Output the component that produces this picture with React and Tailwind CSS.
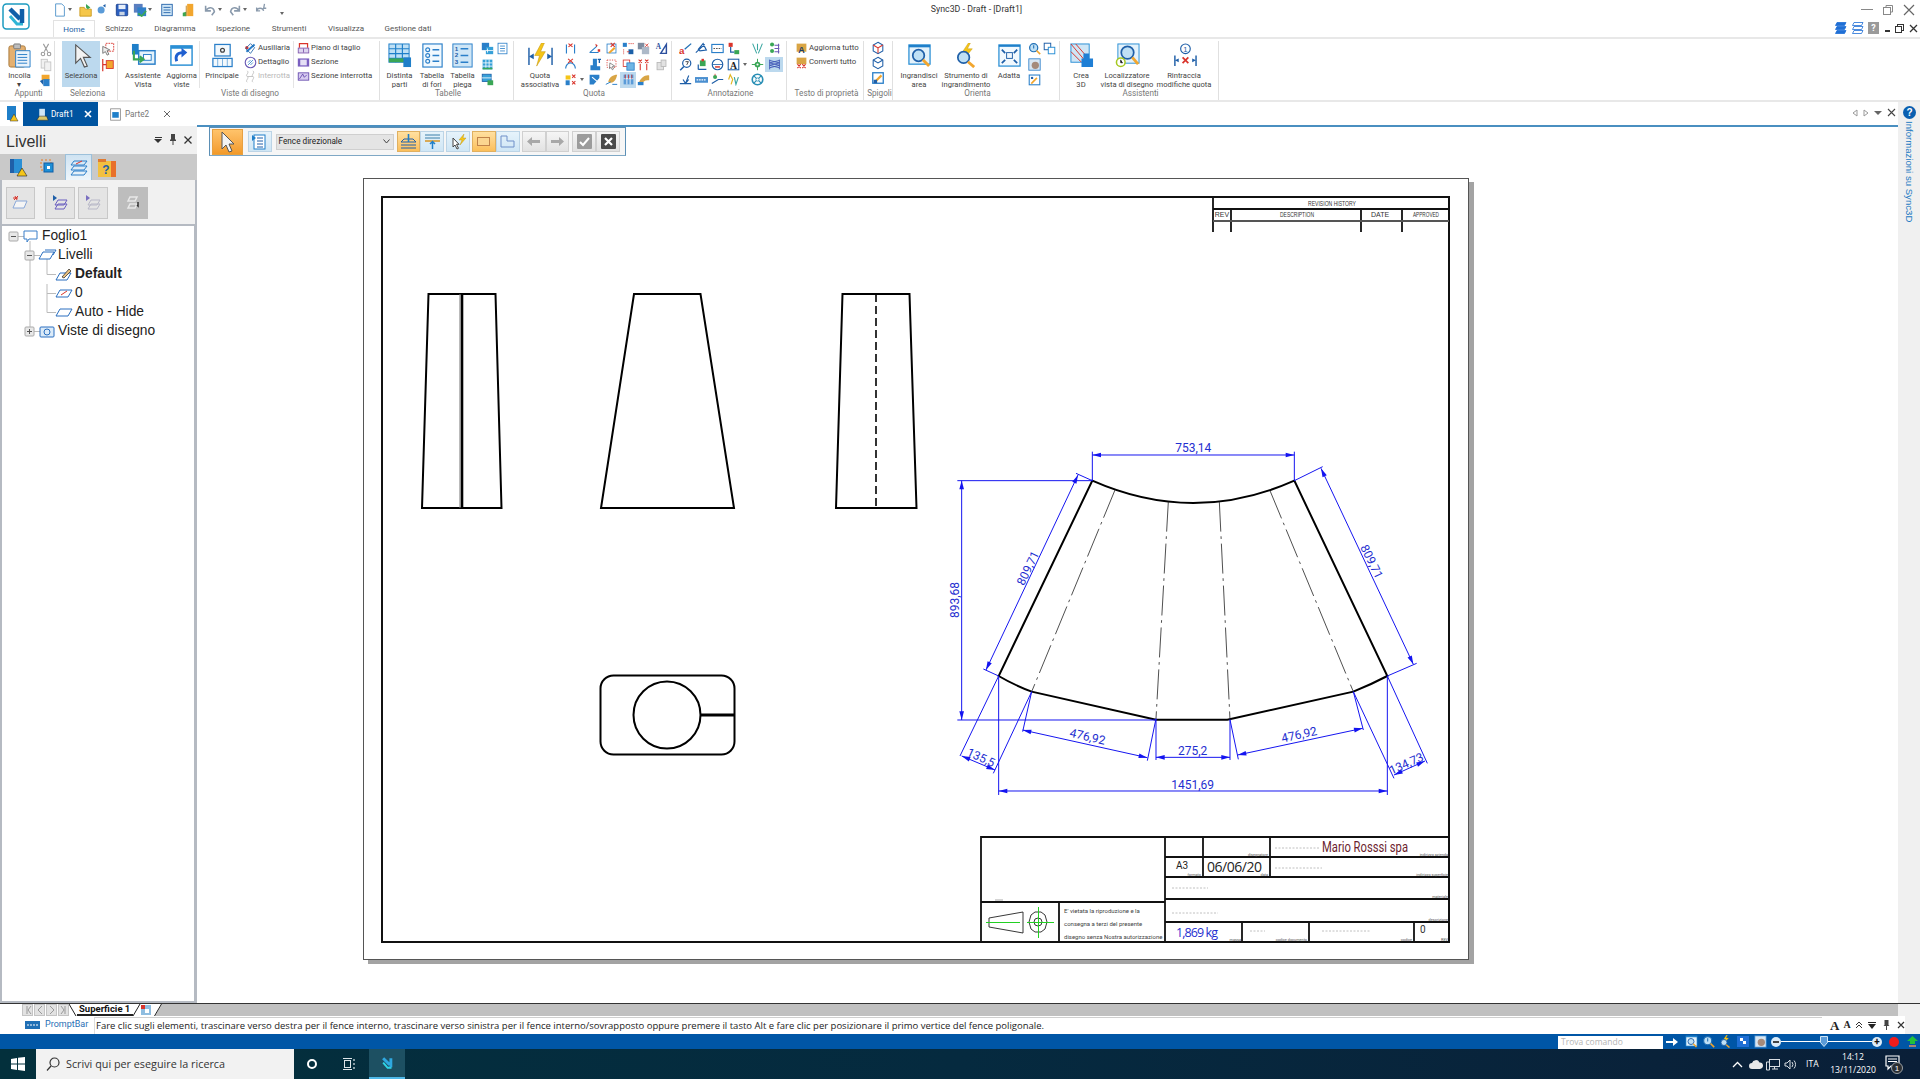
const RED = "#d9342b"
const BLU = "#2a7fc9"
const ORG = "#f2a62e"
const GRN = "#3aa655"
const YEL = "#f5c518"

// small ribbon glyphs, all on a 16x16 box
const glyphs = {
  scissors: <g fill="none" stroke="#9a9a9a" strokeWidth="1.2"><path d="M5 1l5 9M11 1L6 10" /><circle cx="4.5" cy="12.5" r="2" /><circle cx="11.5" cy="12.5" r="2" /></g>,
  copy: <g fill="#f1f1f1" stroke="#c4c4c4"><rect x="2.5" y="1.5" width="7" height="10" /><rect x="6.5" y="4.5" width="7" height="10" /></g>,
  brush: <g><rect x="3" y="2" width="9" height="6" fill={ORG} /><rect x="5" y="7" width="7" height="8" fill={BLU} /><path d="M1 9l4-2v7z" fill="#1a5fa8" /></g>,
  selbox: <g fill="none"><rect x="5.5" y="1.5" width="9" height="9" stroke={RED} strokeDasharray="2 1" /><path d="M2 5l8 4-3 1 2 4-2 1-2-4-3 2z" fill="#eee" stroke="#555" strokeWidth=".8" /></g>,
  pin: <g><rect x="6" y="3" width="8" height="9" fill={ORG} stroke={RED} /><path d="M2 1v14M2 7.5h4" stroke={RED} strokeWidth="1.4" /></g>,
  aux: <g><path d="M3 12L13 3" stroke={BLU} strokeWidth="2.4" /><circle cx="3.5" cy="7" r="2" fill={RED} /><path d="M8 2l5 5-5 7-6-6z" fill="none" stroke="#1a5fa8" /></g>,
  detail: <g fill="none"><circle cx="8" cy="8" r="6.5" stroke="#6b5bb5" strokeWidth="1.4" /><path d="M5 11l6-6M5 8l3-3M8 11l3-3" stroke={BLU} /></g>,
  broke: <g fill="none" stroke="#b9b9b9"><path d="M4 1c3 3-3 5 0 7s-3 5 0 7M11 1c3 3-3 5 0 7s-3 5 0 7M4 8h7" /></g>,
  piano: <g fill="none"><path d="M3 7V2h10v5" stroke={RED} strokeWidth="1.5" /><rect x="1.5" y="7.5" width="13" height="6" stroke="#7a4fa8" fill="#ddd5f0" /><path d="M8 8v5" stroke="#7a4fa8" /></g>,
  sezione: <g><rect x="1" y="3" width="14" height="10" fill="#7a5fc0" /><rect x="4" y="4.5" width="8" height="7" fill="#e5e0f5" /></g>,
  sezint: <g fill="none"><rect x="1.5" y="3.5" width="13" height="9" stroke="#5c3fa8" fill="#d7ccf0" /><path d="M3 11l4-6 2 4 3-3" stroke="#5c3fa8" /></g>,
  tb1: <g><rect x="1" y="1" width="9" height="9" fill={BLU} /><rect x="6" y="6" width="9" height="9" fill="#36a0d8" /><path d="M8 8v5M6 10.5h9" stroke="#fff" /></g>,
  tb2: <g fill="#fff" stroke={BLU}><rect x="2.5" y="1.5" width="11" height="13" /><path d="M5 5h6M5 8h6M5 11h6" /></g>,
  tb3: <g><rect x="2" y="2" width="12" height="12" fill="#36a0d8" /><path d="M2 6h12M2 10h12M6 2v12M10 2v12" stroke="#fff" /><rect x="2" y="12" width="12" height="2" fill={GRN} /></g>,
  tb4: <g><rect x="1.5" y="1.5" width="11" height="9" fill="#36a0d8" stroke="#1a5fa8" /><path d="M1 6h12" stroke="#fff" /><rect x="8" y="9" width="7" height="6" fill={GRN} /></g>,
  dimh: <g fill="none" stroke={BLU} strokeWidth="1.4"><path d="M3 3v11M13 3v11" /><path d="M5.5 2l5 4M10.5 2l-5 4" stroke={RED} /></g>,
  angle: <g fill="none"><path d="M2 13L11 5M2 13h11" stroke={BLU} strokeWidth="1.3" /><path d="M9 2l3 2-2 2zM12 9h3v3h-3z" fill={RED} /></g>,
  boxred: <g><rect x="2.5" y="2.5" width="11" height="11" fill="#fff" stroke={BLU} /><path d="M4 13l7-7 2 2-7 6z" fill={ORG} /><path d="M7 1l5 5M12 1L7 6" stroke={RED} strokeWidth="1.4" /></g>,
  tree: <g><rect x="1" y="1" width="5" height="5" fill={BLU} /><path d="M8 2h7M2 9v6" stroke={RED} strokeDasharray="1.5 1" /><rect x="8" y="9" width="6" height="6" fill="#1a5fa8" /><path d="M6 12h3" stroke={RED} /></g>,
  stack: <g><rect x="1" y="1" width="8" height="8" fill="#7f8da0" /><rect x="6" y="6" width="9" height="9" fill="#adb9c8" /><path d="M10 2l4 4M14 2l-4 4" stroke={RED} /></g>,
  arc: <g fill="none"><path d="M2 13a6 7 0 0 1 12 0" stroke={BLU} strokeWidth="1.5" /><path d="M5 1l6 5M11 1L5 6" stroke={RED} strokeWidth="1.3" /></g>,
  lshape: <g fill={BLU}><path d="M6 1h5v9h4v5H3V9h3z" /><path d="M12 1h4v1.5h-1.2V6h-1.6V2.5H12z" fill="#1a5fa8" /></g>,
  cursor: <g fill="none"><rect x="2.5" y="2.5" width="11" height="9" stroke={RED} strokeDasharray="1.5 1.5" /><path d="M6 6l6 4-3 .5 1.5 3-1.5 1-1.5-3-2 1.5z" fill="#fff" stroke="#555" strokeWidth=".8" /></g>,
  docs: <g><rect x="1.5" y="2.5" width="8" height="8" fill="#fff" stroke={RED} /><rect x="6" y="6" width="9" height="9" fill="#6db5e5" stroke={BLU} /></g>,
  xx: <g fill="none" stroke={RED} strokeWidth="1.3"><path d="M2 2l4 4M6 2L2 6M10 2l4 4M14 2l-4 4M4 7v8M12 7v8" /></g>,
  mix: <g><path d="M2 3h6v5H2z" fill={YEL} /><path d="M2 9h5v6H2z" fill={BLU} /><path d="M10 2l4 4M14 2l-4 4M10 10l4 4M14 10l-4 4" stroke={RED} strokeWidth="1.3" /></g>,
  fold: <g><path d="M2 2h12v4l-7 8H2z" fill={BLU} /><path d="M5 5l7 6M8 14h6" stroke="#fff" strokeWidth="1.4" /></g>,
  wing: <g><path d="M4 11c1-6 6-9 11-9-1 4-2 9-8 10z" fill="#d9a545" /><path d="M1 14l6-3M9 14h6" stroke={BLU} strokeWidth="1.2" /></g>,
  bars: <g><rect x="2" y="2" width="12" height="12" fill="#5a9bd8" /><path d="M6 2v12M10 2v12M2 7h12" stroke="#fff" /><path d="M4 2v5M8 2v5M12 2v5" stroke={RED} /></g>,
  wave: <g><path d="M2 13c2-7 8-11 13-10v6c-5-1-8 2-9 5z" fill="#d9a545" /><rect x="1" y="11" width="7" height="4" fill={BLU} /></g>,
  atri: <g><path d="M7 14L14 3v11z" fill="none" stroke="#2b4f9e" strokeWidth="1.8" /><text x="1" y="9" fontSize="9" fontWeight="700" fill="#2b4f9e" fontFamily="Liberation Serif">A</text></g>,
  gdoc: <g fill="#e2e2e2" stroke="#b5b5b5"><rect x="2.5" y="5.5" width="8" height="9" /><rect x="7.5" y="2.5" width="6" height="8" /></g>,
  afront: <g><text x="0" y="15" fontSize="12" fontWeight="700" fill={RED} fontFamily="Liberation Sans">a</text><path d="M7 9L15 2" stroke="#1f6fb5" strokeWidth="1.6" /></g>,
  node: <g fill="none" stroke="#1f5fa8" strokeWidth="1.4"><path d="M1 13L12 3M4 9l6-7 4 8-8 1z" /></g>,
  abox: <g><rect x="1" y="3" width="14" height="10" fill="#fff" stroke={BLU} strokeWidth="1.4" /><path d="M3 8h10" stroke="#333" strokeDasharray="2 1.2" /></g>,
  conn: <g><rect x="2" y="1" width="5" height="5" fill={RED} /><rect x="9" y="10" width="6" height="5" fill={GRN} /><path d="M4.5 6v6.5H9" stroke="#1f5fa8" strokeWidth="1.5" fill="none" /></g>,
  fork: <g fill="none" stroke="#3aa6a0" strokeWidth="1.3"><path d="M2 2l5 12M14 2L9 14M8 2v8" /></g>,
  gsym: <g><circle cx="5" cy="3" r="2.5" fill={GRN} /><path d="M8 4h6M8 8h6M8 12h6M13 2v12" stroke="#6b5bb5" strokeWidth="1.3" /><circle cx="5" cy="11" r="2.5" fill={GRN} /></g>,
  mag7: <g fill="none"><circle cx="9.5" cy="6.5" r="5" stroke="#1f5fa8" strokeWidth="1.5" /><path d="M6 10.5L1.5 15" stroke="#1f5fa8" strokeWidth="1.8" /><path d="M8 4.5h3.5l-2 4" stroke="#222" /></g>,
  gstar: <g><path d="M4 14V8M4 14h10" stroke="#1f5fa8" strokeWidth="1.5" /><rect x="6" y="3" width="7" height="7" fill={GRN} /><rect x="8" y="1" width="3" height="3" fill={RED} /></g>,
  cred: <g fill="none"><circle cx="8" cy="8" r="6.5" stroke="#1f5fa8" strokeWidth="1.4" /><path d="M1.5 8h13" stroke="#1f5fa8" /><path d="M5 11h6" stroke={RED} strokeWidth="1.8" /></g>,
  abold: <g><rect x="1.5" y="1.5" width="13" height="13" fill="#fff" stroke="#1f5fa8" strokeWidth="1.3" /><text x="8" y="13" fontSize="12" fontWeight="700" textAnchor="middle" fill="#222" fontFamily="Liberation Serif">A</text></g>,
  gcross: <g><path d="M8 1v14M1 8h14" stroke={GRN} strokeWidth="1.2" /><circle cx="8" cy="8" r="3.5" fill={GRN} /><circle cx="8" cy="8" r="1.3" fill="#fff" /></g>,
  lattice: <g fill="none" stroke="#3f55b5" strokeWidth="1.1"><path d="M2 2v12M14 2v12M2 3l12 3L2 9l12 3M14 3L2 6l12 3L2 12" /></g>,
  weld: <g fill="none" stroke="#1f5fa8" strokeWidth="1.4"><path d="M1 13h14M8 13L12 3M5 8l3 5 4-5" /></g>,
  dots: <g><rect x="0" y="5" width="16" height="7" fill="#4a8fd0" /><path d="M2 8.5h12" stroke="#fff" strokeDasharray="2 1" strokeWidth="1.5" /></g>,
  gline: <g><path d="M1 13l8-5h6" stroke="#1f5fa8" strokeWidth="1.5" fill="none" /><circle cx="5" cy="5" r="2.5" fill={GRN} /><path d="M5 1v2" stroke={RED} /></g>,
  yfork: <g fill="none" strokeWidth="1.4"><path d="M2 8l2-6 3 6-2 6" stroke="#e0b520" /><path d="M9 5l2 9 3-9" stroke="#3aa6a0" /></g>,
  tcirc: <g fill="none"><circle cx="8" cy="8" r="6.5" stroke="#2a8fb5" strokeWidth="2" /><path d="M3.5 3.5l9 9M12.5 3.5l-9 9" stroke="#2a8fb5" strokeWidth="1.5" /><circle cx="8" cy="8" r="2" fill="#fff" stroke="#2a8fb5" /></g>,
  aglobe: <g><rect x="2" y="2" width="12" height="10" fill="#d9a545" /><text x="8" y="14" fontSize="11" fontWeight="700" textAnchor="middle" fill="#1a3a6a" fontFamily="Liberation Sans">A</text></g>,
  aconv: <g><rect x="2" y="2" width="12" height="8" fill="#d9a545" /><path d="M3 10l4 5M7 10l-4 5M9 10l4 5M13 10l-4 5" stroke={RED} strokeWidth="1.3" /></g>,
  cubeR: <g fill="#fff" stroke="#1f5fa8" strokeWidth="1.2"><path d="M8 1.5l5.5 3v7L8 14.5l-5.5-3v-7z" /><path d="M2.5 4.5L8 8l5.5-3.5M8 8v6" stroke={RED} /></g>,
  cube: <g fill="#fff" stroke="#1f5fa8" strokeWidth="1.2"><path d="M8 1.5l5.5 3v7L8 14.5l-5.5-3v-7z" /><path d="M2.5 4.5L8 8l5.5-3.5" /></g>,
  cubeB: <g><rect x="2" y="2" width="12" height="12" fill="#fff" stroke={BLU} strokeWidth="1.5" /><path d="M5 12l7-7" stroke={ORG} strokeWidth="2.5" /><rect x="3" y="10" width="4" height="4" fill="#1f5fa8" /></g>,
  zoomQ: <g fill="none"><circle cx="7" cy="7" r="5" fill="#bfe0f5" stroke="#1f6fb5" strokeWidth="1.5" /><path d="M10.5 10.5L15 15" stroke={ORG} strokeWidth="2" /><path d="M7 4v4" stroke="#1f6fb5" strokeWidth="1.3" /></g>,
  twin: <g fill="#fff" stroke="#1f5fa8" strokeWidth="1.2"><rect x="1.5" y="1.5" width="8" height="8" /><rect x="6.5" y="6.5" width="8" height="8" stroke="#2a8fd5" /></g>,
  grab: <g><rect x="1" y="1" width="14" height="14" fill="#d8e6f2" stroke={BLU} /><circle cx="9" cy="9" r="4.5" fill="#a58a7a" /></g>,
  window: <g><rect x="1.5" y="2.5" width="13" height="12" fill="#fff" stroke={BLU} strokeWidth="1.3" /><path d="M4 13l7-7" stroke={ORG} strokeWidth="2" /><circle cx="5" cy="6" r="1.5" fill="#1f5fa8" /></g>,
}

const G = ({ n, s = 14, className = "" }) => (
  <svg width={s} height={s} viewBox="0 0 16 16" className={"shrink-0 " + className}>{glyphs[n]}</svg>
)

const Caret = () => <span className="inline-block w-0 h-0 border-x-[2.5px] border-x-transparent border-t-[3px] border-t-[#666]"></span>

// big ribbon pictures, 26x26
const big = {
  clip: <g><rect x="2" y="3" width="17" height="22" rx="2" fill="#e4b070" stroke="#a9793a" /><rect x="7" y="1" width="7" height="5" rx="1" fill="#bdbdbd" stroke="#777" /><path d="M9 8h15v17H9z" fill="#eaf3fb" stroke={BLU} /><path d="M11 12h10M11 15h10M11 18h10M11 21h10" stroke={BLU} /></g>,
  arrow: <path d="M7 2l0 19 5-5 4 9 3-1-4-9h7z" fill="#f3f3f3" stroke="#555" strokeWidth="1.2" />,
  assist: <g><rect x="8" y="8" width="17" height="14" fill="#e4f2fb" stroke={BLU} strokeWidth="1.5" /><rect x="13" y="12" width="8" height="6" fill="#fff" stroke={BLU} /><path d="M1 1h7v11H1z" fill="#1f7fc9" /><path d="M3 8v9h9M9 14l4 3-4 3" fill="none" stroke={GRN} strokeWidth="2.2" /></g>,
  refresh: <g><rect x="2" y="3" width="22" height="20" fill="#fff" stroke="#2a8fd5" strokeWidth="1.5" /><path d="M2 3h22v3H2z" fill="#2a8fd5" /><path d="M8 19c-2-6 1-9 6-9" fill="none" stroke="#1f5fd0" strokeWidth="3" /><path d="M13 5l6 5-6 5z" fill="#1f5fd0" /></g>,
  princ: <g fill="none" stroke={BLU} strokeWidth="1.3"><rect x="5" y="1.5" width="16" height="12" fill="#f3f9fd" /><circle cx="13" cy="7.5" r="2" stroke="#444" /><rect x="3" y="16" width="20" height="8.5" fill="#f3f9fd" /><path d="M13 16v8.5M8 16v8.5M18 16v8.5" strokeWidth=".6" /></g>,
  dist: <g><rect x="2" y="1" width="21" height="19" fill="#bfe0f5" stroke="#1f7fc9" /><path d="M2 6h21M2 11h21M2 16h21M9 1v19M16 1v19" stroke="#1f7fc9" strokeWidth="1.2" /><rect x="2" y="16" width="21" height="4" fill={GRN} /><rect x="17" y="15" width="8" height="10" fill="#1f7fc9" /></g>,
  fori: <g fill="none" stroke={BLU} strokeWidth="1.2"><rect x="3" y="1" width="20" height="24" fill="#f2f9fe" /><circle cx="8" cy="7" r="2" /><circle cx="8" cy="13" r="2" /><circle cx="8" cy="19" r="2" /><path d="M13 7h7M13 13h7M13 19h7" strokeWidth="1.6" /></g>,
  piega: <g><rect x="3" y="1" width="20" height="24" fill="#cfe6f6" stroke={BLU} /><g fontSize="6.5" fontFamily="Liberation Sans" fontWeight="700" fill="#1f5fa8"><text x="5" y="8">1</text><text x="5" y="15">2</text><text x="5" y="22">3</text></g><path d="M11 6h8M11 13h8M11 20h8" stroke={BLU} strokeWidth="1.4" /></g>,
  quota: <g><path d="M14 0L7 13h5l-3 11 9-15h-5l4-9z" fill={YEL} stroke="#c99a10" strokeWidth=".6" /><path d="M1 5v18M25 5v18" stroke="#1f5fa8" strokeWidth="1.5" /><path d="M1 14l5-3v6zM25 14l-5-3v6z" fill="#1f5fa8" /></g>,
  zoomw: <g><rect x="2" y="2" width="22" height="20" fill="#e4f2fb" stroke="#2a8fd5" strokeWidth="1.3" /><path d="M2 2h22v2.5H2z" fill="#1f7fc9" /><circle cx="12" cy="13" r="6" fill="#bfe0f5" stroke="#1f5fa8" strokeWidth="1.8" /><path d="M16.5 17.5L23 24" stroke={ORG} strokeWidth="3" /></g>,
  strum: <g><path d="M15 0L9 9h4l-2 7 8-10h-5l3-6z" fill={YEL} stroke="#c99a10" strokeWidth=".5" /><circle cx="10" cy="15" r="6" fill="#bfe0f5" stroke="#1f5fa8" strokeWidth="1.8" /><path d="M14.5 19.5L21 25" stroke={ORG} strokeWidth="3" /></g>,
  fit: <g><rect x="2" y="2" width="22" height="22" fill="#f2f9fe" stroke="#2a8fd5" strokeWidth="1.3" /><path d="M2 2h22v2H2z" fill="#1f7fc9" /><rect x="10" y="10" width="6" height="6" fill="none" stroke="#1f5fa8" /><path d="M5 7l3.5 3.5M21 7l-3.5 3.5M5 21l3.5-3.5M21 21l-3.5-3.5" stroke="#1f5fa8" strokeWidth="1.8" /></g>,
  crea: <g><rect x="2" y="1" width="19" height="19" fill="#cfe6f6" stroke="#2a8fd5" /><path d="M2 1l16 19M7 1l14 16M2 9l11 11" stroke={RED} /><path d="M15 11h6v5h4v9H13v-9h2z" fill="#1f7fd5" /></g>,
  loca: <g><rect x="3" y="1" width="22" height="20" fill="#e4f2fb" stroke="#2a8fd5" /><circle cx="13" cy="10" r="6.5" fill="#bfe0f5" stroke="#1f5fa8" strokeWidth="1.8" /><path d="M18 15l6 7" stroke={ORG} strokeWidth="3" /><circle cx="6" cy="20" r="4.5" fill="#fff" stroke="#a5c820" strokeWidth="1.6" /><path d="M6 17.5v3h2" stroke="#222" /></g>,
  rint: <g><circle cx="14" cy="6" r="5" fill="#fff" stroke="#1f5fa8" strokeWidth="1.2" /><text x="14" y="9" fontSize="8" textAnchor="middle" fill="#1f5fa8" fontFamily="Liberation Sans">1</text><path d="M3 13v11M25 13v11" stroke="#1f5fa8" strokeWidth="1.5" /><path d="M3 18l4-2v4zM25 18l-4-2v4z" fill="#1f5fa8" /><path d="M11 15l6 6M17 15l-6 6" stroke={RED} strokeWidth="1.8" /></g>,
}

const Big = ({ n, s = 25 }) => <svg width={s} height={s} viewBox="0 0 26 26" className="shrink-0">{big[n]}</svg>

const BigBtn = ({ n, w, l1, l2, active }) => (
  <div className={"flex flex-col items-center pt-[2px] shrink-0 " + w + (active ? " bg-[#bcd9ee] h-[46px]" : "")}>
    <Big n={n} />
    <div className="mt-[3px] text-[7.6px] leading-[9px] text-center whitespace-nowrap text-[#444]">{l1}<br />{l2}</div>
  </div>
)

const Group = ({ w, label, children }) => (
  <div className={"flex flex-col shrink-0 h-[59px] mt-[2px] border-r border-[#e0e0e0] " + w}>
    <div className="flex h-[47px]">{children}</div>
    <div className="text-[8.2px] leading-[10px] text-center text-[#777] pl-[3px] whitespace-nowrap">{label}</div>
  </div>
)

const Sep = () => <div className="w-px h-[47px] bg-[#e4e4e4] shrink-0"></div>

const ListRow = ({ n, t, gray }) => (
  <div className={"flex items-center gap-[1px] h-[14px] text-[7.8px] whitespace-nowrap " + (gray ? "text-[#b8b8b8]" : "text-[#444]")}>
    <G n={n} s={13} />{t}
  </div>
)

const IconCell = ({ n, hot }) => (
  <div className={"flex items-center justify-center h-[15.5px] " + (hot ? "bg-[#bcd9ee]" : "")}><G n={n} s={13} /></div>
)

const Ribbon = () => (
  <div className="flex h-[65px] border-t-2 border-b-2 border-[#e8e8e8] shrink-0 bg-white">
    <Group w="w-[55px]" label="Appunti">
      <BigBtn n="clip" w="w-[39px]" l1="Incolla" l2="▾" />
      <div className="flex flex-col mt-[2px] gap-[1px]"><G n="scissors" /><G n="copy" /><G n="brush" /></div>
    </Group>
    <Group w="w-[63px]" label="Seleziona">
      <div className="w-[7px]"></div>
      <BigBtn n="arrow" w="w-[38px]" l1="Seleziona" l2="" active />
      <div className="flex flex-col pl-[1px] mt-[1px] gap-[2px]"><G n="selbox" /><G n="pin" /></div>
    </Group>
    <Group w="w-[262px]" label="Viste di disegno">
      <div className="w-[4px]"></div>
      <BigBtn n="assist" w="w-[42px]" l1="Assistente" l2="Vista" />
      <BigBtn n="refresh" w="w-[35px]" l1="Aggiorna" l2="viste" />
      <Sep />
      <BigBtn n="princ" w="w-[44px]" l1="Principale" l2="" />
      <div className="w-[49px]">
        <ListRow n="aux" t="Ausiliaria" />
        <ListRow n="detail" t="Dettaglio" />
        <ListRow n="broke" t="Interrotta" gray />
      </div>
      <Sep />
      <div className="ml-[3px]">
        <ListRow n="piano" t="Piano di taglio" />
        <ListRow n="sezione" t="Sezione" />
        <ListRow n="sezint" t="Sezione interrotta" />
      </div>
    </Group>
    <Group w="w-[134px]" label="Tabelle">
      <div className="w-[2px]"></div>
      <BigBtn n="dist" w="w-[35px]" l1="Distinta" l2="parti" />
      <BigBtn n="fori" w="w-[30px]" l1="Tabella" l2="di fori" />
      <BigBtn n="piega" w="w-[31px]" l1="Tabella" l2="piega" />
      <div className="grid grid-cols-[15px_15px] content-start ml-[2px]">
        <IconCell n="tb1" /><IconCell n="tb2" />
        <IconCell n="tb3" /><div></div>
        <IconCell n="tb4" /><div></div>
      </div>
    </Group>
    <Group w="w-[158px]" label="Quota">
      <BigBtn n="quota" w="w-[52px]" l1="Quota" l2="associativa" />
      <div className="grid grid-cols-[16px_8px_17px_17px_16px_15px_20px] content-start -ml-[4px]">
        <IconCell n="dimh" /><div></div><IconCell n="angle" /><IconCell n="boxred" /><IconCell n="tree" /><IconCell n="stack" /><IconCell n="atri" />
        <IconCell n="arc" /><div></div><IconCell n="lshape" /><IconCell n="cursor" /><IconCell n="docs" /><IconCell n="xx" /><IconCell n="gdoc" />
        <IconCell n="mix" /><div className="flex items-center justify-center"><Caret /></div><IconCell n="fold" /><IconCell n="wing" /><IconCell n="bars" hot /><IconCell n="wave" /><div></div>
      </div>
    </Group>
    <Group w="w-[115px]" label="Annotazione">
      <div className="grid grid-cols-[16px_17px_15px_16px_8px_16px_18px] content-start ml-[5px]">
        <IconCell n="afront" /><IconCell n="node" /><IconCell n="abox" /><IconCell n="conn" /><div></div><IconCell n="fork" /><IconCell n="gsym" />
        <IconCell n="mag7" /><IconCell n="gstar" /><IconCell n="cred" /><IconCell n="abold" /><div className="flex items-center justify-center"><Caret /></div><IconCell n="gcross" /><IconCell n="lattice" hot />
        <IconCell n="weld" /><IconCell n="dots" /><IconCell n="gline" /><IconCell n="yfork" /><div></div><IconCell n="tcirc" /><div></div>
      </div>
    </Group>
    <Group w="w-[77px]" label="Testo di proprietà">
      <div className="ml-[8px]">
        <ListRow n="aglobe" t="Aggiorna tutto" />
        <ListRow n="aconv" t="Converti tutto" />
      </div>
    </Group>
    <Group w="w-[29px]" label="Spigoli">
      <div className="flex flex-col items-center w-full gap-[1px]"><G n="cubeR" /><G n="cube" /><G n="cubeB" /></div>
    </Group>
    <Group w="w-[167px]" label="Orienta">
      <div className="w-[4px]"></div>
      <BigBtn n="zoomw" w="w-[44px]" l1="Ingrandisci" l2="area" />
      <BigBtn n="strum" w="w-[50px]" l1="Strumento di" l2="ingrandimento" />
      <BigBtn n="fit" w="w-[36px]" l1="Adatta" l2="" />
      <div className="grid grid-cols-[15px_15px] content-start">
        <IconCell n="zoomQ" /><IconCell n="twin" />
        <IconCell n="grab" /><div></div>
        <IconCell n="window" /><div></div>
      </div>
    </Group>
    <Group w="w-[159px]" label="Assistenti">
      <div className="w-[4px]"></div>
      <BigBtn n="crea" w="w-[34px]" l1="Crea" l2="3D" />
      <BigBtn n="loca" w="w-[58px]" l1="Localizzatore" l2="vista di disegno" />
      <BigBtn n="rint" w="w-[56px]" l1="Rintraccia" l2="modifiche quota" />
    </Group>
  </div>
)

const Logo = () => (
  <svg width="28" height="27" viewBox="0 0 28 27" className="ml-[2px] mt-[3px]">
    <rect x="1" y="1" width="26" height="25" rx="3.5" fill="#fff" stroke="#1c9bc0" strokeWidth="1.5" />
    <path d="M8 13l7 8h6" fill="none" stroke="#2fb5d5" strokeWidth="3" />
    <path d="M8 6l10 10M20 6v14" fill="none" stroke="#0f5fa8" strokeWidth="4.5" />
  </svg>
)

const quick = [
  ["ml-[0px]", "m"], ["ml-[1px]", "c"], ["ml-[6px]", "f"], ["ml-[2px]", "b"], ["ml-[6px]", "s"], ["ml-[4px]", "sa"], ["ml-[1px]", "c"], ["ml-[7px]", "l"], ["ml-[7px]", "o"], ["ml-[8px]", "u"], ["ml-[1px]", "c"], ["ml-[5px]", "r"], ["ml-[1px]", "c"], ["ml-[6px]", "k"],
]
const quickIcons = {
  m: <path d="M3 1h7l3 3v11H3z" fill="#fff" stroke="#4a90c8" />,
  f: <g><path d="M1 5h5l1 2h7v8H1z" fill="#f5c74a" stroke="#c99a20" /><path d="M8 1l5 4-3 2-2-2" fill={GRN} /></g>,
  b: <g><circle cx="7" cy="8" r="4" fill="#5a9bd8" /><path d="M9 3l3-2v4z" fill="#1f5fa8" /></g>,
  s: <g><rect x="1.5" y="1.5" width="13" height="13" rx="1" fill="#2a5fc0" stroke="#1a3f8a" /><rect x="4" y="2" width="8" height="5" fill="#e8f0fa" /><rect x="5" y="10" width="6" height="4" fill="#c8d4e4" /></g>,
  sa: <g><rect x="1" y="1" width="10" height="10" fill="#5a7fc0" /><rect x="5" y="5" width="10" height="10" fill="#2f7fc9" /><path d="M6 12l4 3 5-6" stroke={GRN} strokeWidth="1.8" fill="none" /></g>,
  l: <g><rect x="2" y="1.5" width="12" height="13" fill="#cfe6f6" stroke="#1f5fa8" /><path d="M4 5h8M4 8h8M4 11h8" stroke="#1f5fa8" /></g>,
  o: <g><rect x="7" y="1" width="7" height="14" fill="#f2a62e" /><path d="M2 11l4-1v5H2z" fill={GRN} /><path d="M6 3v12" stroke="#b87a10" /></g>,
  u: <path d="M3 3v6h6M3 9c3-5 9-5 10 1l-3 4" fill="none" stroke="#8a9aac" strokeWidth="1.8" />,
  r: <path d="M13 3v6H7M13 9c-3-5-9-5-10 1l3 4" fill="none" stroke="#8a9aac" strokeWidth="1.8" />,
  k: <path d="M3 5v4h4M3 9c1-4 7-4 8 0M12 1l-1 5 3 0" fill="none" stroke="#8a9aac" strokeWidth="1.5" />,
}

const Quick = () => (
  <div className="flex items-center w-[244px]">
    {quick.map(([m, k], i) => k === "c"
      ? <span key={i} className={"flex items-center w-[5px] " + m}><Caret /></span>
      : <svg key={i} width="14" height="14" viewBox="0 0 16 16" className={m}>{quickIcons[k]}</svg>)}
    <span className="ml-[12px]"><Caret /></span>
  </div>
)

const Stackish = ({ solid }) => (
  <svg width="13" height="12" viewBox="0 0 13 12">
    {[0, 4, 8].map(y => <path key={y} d={`M3 ${y + 0.5}h9l-1.5 3H1.500z`} fill={solid ? "#1f6fd5" : "#fff"} stroke="#1f6fd5" strokeWidth=".8" />)}
  </svg>
)

const TopBar = () => (
  <div className="flex h-[37px] shrink-0 bg-white">
    <div className="w-[53px] shrink-0"><Logo /></div>
    <div className="flex flex-col flex-1 min-w-0">
      <div className="flex h-[19px] items-center">
        <Quick />
        <div className="w-[1334px] text-center text-[8.8px] text-[#333] pl-[25px] mt-[1px] shrink-0">Sync3D - Draft - [Draft1]</div>
        <div className="flex-1"></div>
        <div className="flex items-center gap-[9px] pr-[5px] text-[#555]">
          <div className="w-[12px] h-[1px] bg-[#888]"></div>
          <svg width="12" height="12" viewBox="0 0 12 12" fill="none" stroke="#888"><rect x="1.5" y="3.5" width="7" height="7" /><path d="M4 3V1.5h6.5V8H9" /></svg>
          <svg width="12" height="12" viewBox="0 0 12 12" stroke="#666" strokeWidth="1.2"><path d="M1 1l10 10M11 1L1 11" /></svg>
        </div>
      </div>
      <div className="flex h-[18px] items-end text-[8px] text-[#555] text-center leading-[17px]">
        <div className="w-[42px] h-[18px] -mb-px bg-white border border-b-0 border-[#e2e2e2] text-[#1c5fa5]">Home</div>
        <div className="w-[48px]">Schizzo</div>
        <div className="w-[64px]">Diagramma</div>
        <div className="w-[52px]">Ispezione</div>
        <div className="w-[60px]">Strumenti</div>
        <div className="w-[54px]">Visualizza</div>
        <div className="w-[70px]">Gestione dati</div>
        <div className="flex-1"></div>
        <div className="flex items-center gap-[4px] h-[18px] pr-[2px]">
          <Stackish solid /><Stackish />
          <div className="flex items-center justify-center w-[11px] h-[12px] bg-[#9a9a9a] text-white text-[9px] leading-none font-bold">?</div>
          <div className="w-[5px] h-[2px] bg-[#333] mt-[6px] ml-[2px]"></div>
          <svg width="9" height="9" viewBox="0 0 9 9" fill="#fff" stroke="#333" className="ml-[1px]"><rect x="2.5" y=".5" width="6" height="6" /><rect x=".5" y="2.5" width="6" height="6" /></svg>
          <svg width="9" height="9" viewBox="0 0 9 9" stroke="#333" strokeWidth="1.3" className="ml-[1px]"><path d="M1 1l7 7M8 1L1 8" /></svg>
        </div>
      </div>
    </div>
  </div>
)

const DocTabs = () => (
  <div className="flex h-[24px] shrink-0 bg-white items-stretch">
    <div className="w-[23px] flex items-center justify-center pl-[2px]">
      <svg width="13" height="16" viewBox="0 0 13 16"><rect x="1" y="0" width="9" height="14" fill="#1f7fc9" /><path d="M4 15l4-7 4 7z" fill={YEL} stroke="#333" strokeWidth=".5" /></svg>
    </div>
    <div className="w-[75px] bg-[#0054a0] flex items-center text-white text-[8.2px]">
      <svg width="13" height="13" viewBox="0 0 16 16" className="ml-[13px]"><path d="M4 1h7v10H4z" fill="#cfe6f6" /><path d="M1 15l3-5h9l2 5z" fill="#d9c76a" stroke="#222" strokeWidth=".6" /></svg>
      <span className="ml-[2px] w-[23px]">Draft1</span>
      <svg width="8" height="8" viewBox="0 0 8 8" stroke="#fff" strokeWidth="1.6" className="ml-[10px]"><path d="M1 1l6 6M7 1L1 7" /></svg>
    </div>
    <div className="flex items-center text-[#777] text-[8.2px]">
      <svg width="13" height="13" viewBox="0 0 16 16" className="ml-[11px]"><rect x="2" y="1" width="12" height="14" fill="#fff" stroke="#888" /><path d="M4 5h8v7H4z" fill="#1f7fc9" /></svg>
      <span className="ml-[3px] w-[25px]">Parte2</span>
      <svg width="8" height="8" viewBox="0 0 8 8" stroke="#666" className="ml-[13px]"><path d="M1 1l6 6M7 1L1 7" /></svg>
    </div>
    <div className="flex-1"></div>
    <div className="flex items-center gap-[5px] pr-[24px] h-[21px]">
      <svg width="6" height="8" viewBox="0 0 6 8" fill="none" stroke="#999"><path d="M5 1L1 4l4 3z" /></svg>
      <svg width="6" height="8" viewBox="0 0 6 8" fill="none" stroke="#999"><path d="M1 1l4 3-4 3z" /></svg>
      <span className="inline-block w-0 h-0 border-x-[4px] border-x-transparent border-t-[4px] border-t-[#666]"></span>
      <svg width="9" height="9" viewBox="0 0 9 9" stroke="#444" strokeWidth="1.1"><path d="M1 1l7 7M8 1L1 8" /></svg>
    </div>
  </div>
)

const ToolBtn = ({ w = "w-[24px]", cls = "from-[#e6f3fb] to-[#cfe6f5] border-[#bcd4e6]", children }) => (
  <div className={"flex items-center justify-center h-[21px] border bg-gradient-to-b " + w + " " + cls}>{children}</div>
)

const tbOrange = "from-[#ffe0a0] to-[#fbbf5a] border-[#e0b060]"
const tbGrey = "from-[#f5f5f5] to-[#e2e2e2] border-[#d0d0d0]"

const Toolbar = () => (
  <div className="flex items-center ml-[12px] w-[417px] h-[29px] shrink-0 bg-[#f6f6f6] border border-[#5b8fb5] border-b-[#7fa8c5] pl-[2px] pr-[5px]">
    <div className="flex items-center justify-center w-[31px] h-[26px] bg-gradient-to-b from-[#ffc36a] to-[#f29a28] border border-[#e8a040]">
      <svg width="16" height="22" viewBox="0 0 16 22"><path d="M3 1v17l4-4 3 7 3-1-3-7h5z" fill="#f3f3f3" stroke="#555" /></svg>
    </div>
    <div className="w-[5px]"></div>
    <ToolBtn>
      <svg width="15" height="16" viewBox="0 0 15 16"><rect x="2" y="1" width="11" height="14" fill="#fff" stroke="#1f7fc9" /><path d="M5 4h6M5 7h6M5 10h6M5 13h6" stroke="#1f5fa8" /><path d="M0 1l4 3-4 3z" fill="#1f7fc9" /></svg>
    </ToolBtn>
    <div className="flex items-center ml-[4px] w-[119px] h-[16px] bg-[#e4e4e4] border border-[#cfcfcf] pl-[2px] text-[8.2px] text-[#222]">
      Fence direzionale
      <svg width="7" height="5" viewBox="0 0 7 5" fill="none" stroke="#444" className="ml-auto mr-[3px]"><path d="M.5.5L3.5 4l3-3.5" /></svg>
    </div>
    <div className="w-[3px]"></div>
    <ToolBtn cls={tbOrange}>
      <svg width="17" height="17" viewBox="0 0 17 17" fill="none" stroke="#1f5fa8"><path d="M1 9l3-3h9l3 3zM1 12h15M1 15h15" /><path d="M8.5 1v8" stroke="#1f7fc9" strokeWidth="1.6" /></svg>
    </ToolBtn>
    <ToolBtn>
      <svg width="17" height="17" viewBox="0 0 17 17" fill="none" stroke="#3a7fa8"><path d="M1 2h15M1 5h15M1 8h15" /><path d="M1 8h15" stroke={ORG} strokeWidth="1.5" /><path d="M8.5 9v7M6 11l2.5-2.5L11 11" stroke="#1f7fc9" strokeWidth="1.5" /></svg>
    </ToolBtn>
    <div className="w-[2px]"></div>
    <ToolBtn>
      <svg width="17" height="17" viewBox="0 0 17 17"><path d="M3 5v9l2-2 2 4 1.5-.7-2-4H9z" fill="#fff" stroke="#444" /><path d="M14 1L9 7h3l-2 5 6-7h-3z" fill={YEL} stroke="#b89010" strokeWidth=".4" /></svg>
    </ToolBtn>
    <div className="w-[2px]"></div>
    <ToolBtn cls={tbOrange}><div className="w-[13px] h-[9px] border border-[#c0824a] bg-[#fbd590]"></div></ToolBtn>
    <ToolBtn>
      <svg width="15" height="13" viewBox="0 0 15 13" fill="none" stroke="#6f8fc8"><path d="M1 1h6v5h7v6H1z" /></svg>
    </ToolBtn>
    <div className="w-[2px]"></div>
    <ToolBtn cls={tbGrey}>
      <svg width="13" height="9" viewBox="0 0 13 9" fill="#a8a8a8"><path d="M0 4.5L5 0v3h8v3H5v3z" /></svg>
    </ToolBtn>
    <ToolBtn cls={tbGrey}>
      <svg width="13" height="9" viewBox="0 0 13 9" fill="#a8a8a8"><path d="M13 4.5L8 0v3H0v3h8v3z" /></svg>
    </ToolBtn>
    <div className="w-[3px]"></div>
    <ToolBtn cls={tbGrey}>
      <svg width="15" height="15" viewBox="0 0 15 15"><rect width="15" height="15" rx="1" fill="#9c9c9c" /><path d="M3 8l3 3 6-7" fill="none" stroke="#fff" strokeWidth="2" /></svg>
    </ToolBtn>
    <ToolBtn cls={tbGrey}>
      <svg width="15" height="15" viewBox="0 0 15 15"><rect width="15" height="15" rx="1" fill="#4a4a4a" /><path d="M4 4l7 7M11 4l-7 7" stroke="#fff" strokeWidth="2.2" /></svg>
    </ToolBtn>
  </div>
)

const TreeBox = ({ x, plus }) => (
  <g>
    <rect x={x} y="5" width="9" height="9" rx="1" fill="#e8e8e8" stroke="#aaa" />
    <path d={`M${x + 2} 9.5h5${plus ? `M${x + 4.5} 7v5` : ""}`} stroke="#555" />
  </g>
)

const TreeRow = ({ w, children, t, bold }) => (
  <div className="flex items-center h-[19px]">
    <svg width={w} height="19" className="shrink-0">{children}</svg>
    <span className={"text-[13.8px] text-[#222] whitespace-nowrap " + (bold ? "font-bold" : "")}>{t}</span>
  </div>
)

const Panel = () => (
  <div className="flex flex-col w-[197px] shrink-0 bg-[#f0f0f0] font-['Liberation_Sans']">
    <div className="flex items-center h-[28px] pl-[6px] pt-[3px] text-[16px] text-[#333]">
      Livelli
      <div className="ml-auto flex items-center gap-[7px] pr-[5px] -mt-[4px]">
        <span className="flex flex-col items-center gap-[1px]"><span className="w-[7px] h-[1px] bg-[#333]"></span><span className="w-0 h-0 border-x-[4px] border-x-transparent border-t-[4px] border-t-[#333]"></span></span>
        <svg width="8" height="11" viewBox="0 0 8 11" fill="#444"><path d="M2 0h4v5l1 1v1H1V6l1-1zM3.5 7h1v4h-1z" /></svg>
        <svg width="8" height="8" viewBox="0 0 8 8" stroke="#333" strokeWidth="1.3"><path d="M.5.5l7 7M7.5.5l-7 7" /></svg>
      </div>
    </div>
    <div className="flex items-end h-[26px] bg-[#c9c9c9] pl-[8px]">
      <svg width="22" height="22" viewBox="0 0 22 22" className="mb-[2px]"><rect x="2" y="3" width="8" height="14" fill="#1f5fa8" /><rect x="6" y="3" width="8" height="14" fill="#2a8fd5" /><path d="M9 20l5-8 5 8z" fill={YEL} stroke="#222" strokeWidth=".6" /></svg>
      <svg width="20" height="20" viewBox="0 0 20 20" className="ml-[8px] mb-[3px]"><rect x="3" y="3" width="10" height="10" fill="none" stroke="#e87a20" strokeDasharray="2 2" /><rect x="6" y="6" width="9" height="9" fill="#1f8fd5" stroke="#0f5fa8" /><rect x="9" y="9" width="3" height="3" fill="#fff" /></svg>
      <div className="flex items-center justify-center ml-[7px] w-[27px] h-[26px] bg-gradient-to-b from-[#cfe3f2] to-[#eef6fb] border-t border-x border-[#9cc0da]">
        <svg width="20" height="18" viewBox="0 0 20 18" fill="none" stroke="#2a7fc9"><path d="M5 2h13l-3 4H2zM5 7h13l-3 4H2zM5 12h13l-3 4H2z" /><path d="M7 5l6-3" stroke={RED} /></svg>
      </div>
      <svg width="20" height="20" viewBox="0 0 20 20" className="ml-[5px] mb-[2px]"><rect x="1" y="3" width="18" height="16" fill="#f2c040" /><rect x="1" y="1" width="8" height="3" fill="#e07a30" /><rect x="14" y="3" width="5" height="16" fill="#e8702a" /><text x="9" y="16" fontSize="12" fontWeight="700" fill="#1f5fa8" textAnchor="middle" fontFamily="Liberation Sans">?</text></svg>
    </div>
    <div className="flex items-center h-[45px] bg-[#f1f1f1] pl-[4px] border-l-2 border-r-2 border-[#b5bac2]">
      <div className="flex items-center justify-center w-[29px] h-[32px] bg-[#e4e4e4] border border-[#c8c8c8]"><svg width="17" height="15" viewBox="0 0 17 15" fill="none" stroke="#8aa8d8"><path d="M4 6h11l-3 7H1z" fill="#f5f5f5" /><path d="M3 1l2 4M1 3h5M6 1L2 5" stroke={RED} /></svg></div>
      <div className="flex items-center justify-center ml-[10px] w-[30px] h-[32px] bg-[#e4e4e4] border border-[#c8c8c8]"><svg width="17" height="16" viewBox="0 0 17 16" fill="none" stroke="#6a5fc0"><path d="M6 5h9l-3 5H3zM6 9h9l-3 5H3z" /><path d="M1 0l4 3-4 3z" fill="#1f5fa8" stroke="none" /></svg></div>
      <div className="flex items-center justify-center ml-[3px] w-[30px] h-[32px] bg-[#e4e4e4] border border-[#c8c8c8]"><svg width="17" height="16" viewBox="0 0 17 16" fill="none" stroke="#b8b8c8"><path d="M6 5h9l-3 5H3zM6 9h9l-3 5H3z" /><path d="M1 0l4 3-4 3z" fill="#7a6fc0" stroke="none" /></svg></div>
      <div className="flex items-center justify-center ml-[10px] w-[30px] h-[32px] bg-[#bdbdbd]"><svg width="16" height="16" viewBox="0 0 16 16" fill="none" stroke="#e8e8e8" strokeWidth="1.5"><path d="M5 2h7l-2 4H3zM5 9h7l-2 4H3z" /><path d="M13 7v4l-1-1" stroke="#333" /></svg></div>
    </div>
    <div className="flex-1 bg-white border-2 border-t-[#b5bac2] border-[#b5bac2] border-r-[3px] pt-[1px] -mt-px">
      <TreeRow w="40" t="Foglio1">
        <path d="M16 9.5h8M28 14v5" stroke="#bbb" />
        <TreeBox x={7} />
        <path d="M22 4h13v8h-8l-2 3v-3h-3z" fill="#fff" stroke="#3a7fc9" />
      </TreeRow>
      <TreeRow w="56" t="Livelli">
        <path d="M28 0v5M28 14v5M32 9.5h6M45 13v6" stroke="#bbb" />
        <TreeBox x={23} />
        <path d="M41 6h11l-4 7H37z" fill="#fff" stroke="#2a6fc0" />
        <path d="M43 4h11l-3 5" fill="none" stroke="#2a6fc0" />
      </TreeRow>
      <TreeRow w="73" t="Default" bold>
        <path d="M28 0v19M45 0v9.5h9" stroke="#bbb" fill="none" />
        <path d="M58 8h11l-4 7H54z" fill="#fff" stroke="#2a6fc0" />
        <path d="M60 12l7-8 2 2-7 7z" fill="#e8c080" stroke="#222" strokeWidth=".7" />
      </TreeRow>
      <TreeRow w="73" t="0">
        <path d="M28 0v19M45 0v19M45 9.5h9" stroke="#bbb" fill="none" />
        <path d="M58 6h12l-4 7H54z" fill="#fff" stroke="#2a6fc0" />
        <path d="M59 11l6-4" stroke={RED} />
      </TreeRow>
      <TreeRow w="73" t="Auto - Hide">
        <path d="M28 0v19M45 0v9.5h9" stroke="#bbb" fill="none" />
        <path d="M58 6h12l-4 7H54z" fill="#fff" stroke="#2a6fc0" />
      </TreeRow>
      <TreeRow w="56" t="Viste di disegno">
        <path d="M28 0v5M32 9.5h6" stroke="#bbb" />
        <TreeBox x={23} plus />
        <rect x="38" y="5" width="14" height="10" rx="1" fill="#dcebf8" stroke="#2a6fc0" />
        <circle cx="45" cy="10" r="3" fill="none" stroke="#2a6fc0" />
      </TreeRow>
    </div>
  </div>
)

const blue = "#1414f0"

// dimension lines are noted in a 3x grid, see the scale on the group
const dims = [
  "M457 152V65M1063 152V65M457 75H1063",
  "M457 152H52M648 870H52M65 152V870",
  "M408 130L457 152M130 717L176 738M414 135L138 720",
  "M1063 152L1148 110M1342 738L1430 700M1143 115L1420 703",
  "M275 785L248 905M648 866L622 992M248 900L622 983",
  "M648 866V990M870 869V990M648 982H870",
  "M870 869L895 988M1240 785L1270 900M893 975L1268 895",
  "M176 738L60 978M275 785L160 1030M65 978L165 1020",
  "M1342 738L1462 1000M1240 785L1362 1045M1362 1035L1455 993",
  "M176 738V1095M1342 738V1095M176 1083H1342",
]
const arrows = [
  [457, 75, 0], [1063, 75, 180], [65, 152, 90], [65, 870, -90], [414, 135, 115], [138, 720, -65],
  [1143, 115, 65], [1420, 703, -115], [248, 900, 13], [622, 983, 193], [648, 982, 0], [870, 982, 180],
  [893, 975, -12], [1268, 895, 168], [65, 978, 22], [165, 1020, 202], [1362, 1035, -24], [1455, 993, 156],
  [176, 1083, 0], [1342, 1083, 180],
]
const dimTexts = [
  ["753,14", 760, 65, 0], ["893,68", 58, 510, -90], ["809,71", 275, 420, -64], ["809,71", 1284, 400, 64],
  ["476,92", 440, 932, 13], ["275,2", 758, 976, 0], ["476,92", 1080, 926, -12], ["135,5", 118, 994, 24],
  ["134,73", 1404, 1012, -24], ["1451,69", 758, 1076, 0],
]

const Sheet = () => (
  <div className="ml-[166px] mt-[22px] w-[1106px] h-[782px] shrink-0 bg-white border border-[#555] shadow-[5px_4px_0_#a3a3a3]">
    <svg width="1104" height="780" viewBox="364 179 1104 780" className="block font-['Liberation_Sans']">
      <rect x="382" y="197" width="1067" height="745" fill="none" stroke="#111" strokeWidth="2" />

      <g fill="none" stroke="#000" strokeWidth="2">
        <path d="M428.5 294H495.5L501.5 508H422Z" />
        <path d="M462 294V508" strokeWidth="2.6" />
        <path d="M460 294V508" strokeWidth="1" stroke="#777" />
        <path d="M634 294H700.5L734 508H601Z" />
        <path d="M842.5 294H909.5L916.5 508H836Z" />
        <path d="M876 294V508" strokeWidth="1.6" strokeDasharray="8 4" />
        <rect x="600.5" y="675.5" width="134" height="79" rx="13" />
        <circle cx="667" cy="715" r="33.5" />
        <path d="M701 715H734" strokeWidth="2.8" />
      </g>

      <g transform="translate(940 430) scale(.33333)">
        <g fill="none" stroke="#000" strokeWidth="6">
          <path d="M457 152Q760 286 1063 152L1342 738Q1290 765 1240 785L862 869H648L275 785Q222 765 176 738Z" />
        </g>
        <g fill="none" stroke="#222" strokeWidth="2.4" strokeDasharray="90 14 8 14">
          <path d="M525 180L275 785M685 215L648 866M838 215L870 869M990 182L1240 785" />
        </g>
        <g fill="none" stroke={blue} strokeWidth="3">
          {dims.map((d, i) => <path key={i} d={d} />)}
        </g>
        <g fill={blue}>
          {arrows.map(([x, y, r], i) => <path key={i} d="M0 0l26-7v14z" transform={`translate(${x} ${y}) rotate(${r})`} />)}
        </g>
        <g fill="#1f2fd0" fontSize="36" textAnchor="middle" fontFamily="Roboto, sans-serif">
          {dimTexts.map(([t, x, y, r], i) => <text key={i} x={x} y={y} transform={r ? `rotate(${r} ${x} ${y})` : undefined}>{t}</text>)}
        </g>
      </g>

      <g fill="none" stroke="#111" strokeWidth="1.8">
        <path d="M1213 197V232M1231 209V232M1361 209V232M1402 209V232M1213 209H1449" />
        <path d="M1213 221H1449" stroke="#555" />
        <path d="M981 942V837H1449M1165 837V942M1203 837V877M1270 837V877M1165 857H1449M1165 877H1449M1165 899H1449M1165 922H1449M981 902H1165M1059 902V942M1242 922V942M1309 922V942M1414 922V942" />
      </g>
      <g fontSize="7" fill="#333" textAnchor="middle" fontFamily="Liberation Sans, sans-serif" lengthAdjust="spacingAndGlyphs">
        <text x="1308" y="205.5" textLength="48" lengthAdjust="spacingAndGlyphs" textAnchor="start">REVISION HISTORY</text>
        <text x="1222" y="217">REV</text>
        <text x="1280" y="217" textLength="34" lengthAdjust="spacingAndGlyphs" textAnchor="start">DESCRIPTION</text>
        <text x="1380" y="217">DATE</text>
        <text x="1413" y="217" textLength="26" lengthAdjust="spacingAndGlyphs" textAnchor="start">APPROVED</text>
      </g>
      <g fontFamily="Roboto, sans-serif">
        <text x="1322" y="852" fontSize="14.5" fill="#6b1d2e" textLength="86" lengthAdjust="spacingAndGlyphs">Mario Rosssi spa</text>
        <text x="1207" y="872" fontSize="14" fill="#222" fontFamily="Open Sans, sans-serif" textLength="55">06/06/20</text>
        <text x="1176" y="869" fontSize="10" fill="#222">A3</text>
        <text x="1176" y="937" fontSize="12.5" fill="#1f2fd0" fontFamily="Open Sans, sans-serif" textLength="42">1,869 kg</text>
        <text x="1420" y="933" fontSize="10" fill="#333">0</text>
      </g>
      <g fontSize="6" fill="#444" fontFamily="Roboto, sans-serif">
        <text x="1064" y="913">E' vietata la riproduzione e la</text>
        <text x="1064" y="926">consegna a terzi del presente</text>
        <text x="1064" y="939">disegno senza Nostra autorizzazione</text>
      </g>
      <g fontSize="3.8" fill="#555" textAnchor="end" fontFamily="Roboto, sans-serif">
        <text x="1268" y="856">disegnatore</text>
        <text x="1448" y="856">indirizzo azienda</text>
        <text x="1201" y="876">formato</text>
        <text x="1268" y="876">data</text>
        <text x="1448" y="876">indirizzo superficie</text>
        <text x="1448" y="898">materiale</text>
        <text x="1448" y="921">descrizione</text>
        <text x="1241" y="941">massa</text>
        <text x="1307" y="941">codice documento</text>
        <text x="1412" y="941">codice</text>
        <text x="1448" y="941">REV</text>
      </g>
      <g stroke="#c0c0c0" strokeDasharray="2 1.5">
        <path d="M1275 848H1320M1275 868H1322M1172 888H1208M1172 913H1218M1250 931H1265M1322 931H1370" />
      </g>
      <path d="M995 900H1003" stroke="#aaa" />
      <g fill="none" stroke="#222" strokeWidth=".9">
        <path d="M989 918L1023 912V933L989 927Z" />
        <path d="M1031 915l4-3h6l4 3 2 7-2 7-4 3h-6l-4-3-2-7z" />
        <circle cx="1038" cy="922" r="4" />
      </g>
      <g stroke="#22d022" strokeWidth="1">
        <path d="M986 922.5H1020M1027 922.5H1054M1038.5 907V938" />
      </g>
    </svg>
  </div>
)

const SheetTabs = () => (
  <div className="flex items-stretch h-[13px] shrink-0 border-t border-[#333] bg-white">
    <div className="flex w-[69px] shrink-0 pl-[22px] gap-[1px]">
      {["M4 1v8M8 1L5 5l3 4", "M7 1L3 5l4 4", "M3 1l4 4-4 4", "M6 1v8M2 1l3 4-3 4"].map(d => (
        <span key={d} className="flex items-center justify-center w-[11px] h-[12px] bg-[#e2e2e2] border border-[#c4c4c4]">
          <svg width="9" height="10" viewBox="0 0 9 10" fill="none" stroke="#999"><path d={d} /></svg>
        </span>
      ))}
    </div>
    <svg width="8" height="12" viewBox="0 0 8 12" className="shrink-0"><path d="M0 0L7 12" stroke="#222" /></svg>
    <div className="flex items-center w-[56px] shrink-0 text-[9.5px] font-bold text-[#111] pl-[2px] whitespace-nowrap border-b-2 border-[#222]">Superficie 1</div>
    <svg width="8" height="12" viewBox="0 0 8 12" className="shrink-0"><path d="M7 0L0 12" stroke="#222" /></svg>
    <div className="flex items-center justify-center w-[16px] shrink-0 -ml-[3px]">
      <svg width="10" height="10" viewBox="0 0 10 10"><rect width="10" height="10" fill="#8fbde0" /><rect x="0" y="0" width="4" height="4" fill={RED} /><rect x="4" y="4" width="4" height="4" fill="#fff" /></svg>
    </div>
    <svg width="8" height="12" viewBox="0 0 8 12" className="shrink-0"><path d="M8 0L1 12H8z" fill="#c0c0c0" /><path d="M7.500 0L.5 12" stroke="#222" /></svg>
    <div className="flex-1 bg-[#c0c0c0]"></div>
    <div className="w-[22px] bg-[#f0f0f0]"></div>
  </div>
)

const PromptBar = () => (
  <div className="flex items-stretch h-[18px] shrink-0 bg-white font-['Open_Sans']">
    <div className="flex items-center w-[94px] shrink-0">
      <svg width="15" height="8" viewBox="0 0 15 8" className="ml-[25px]"><rect width="15" height="8" fill="#1f6fb5" /><path d="M2 4h11" stroke="#fff" strokeDasharray="2 1" /></svg>
      <span className="ml-[5px] text-[9px] text-[#2a6fb5] font-['Roboto']">PromptBar</span>
    </div>
    <div className="flex items-center w-[1728px] shrink-0 mt-[1px] border-t border-[#cfcfcf] border-l border-l-[#ddd] pl-[1px]">
      <span className="text-[9.5px] text-[#222] whitespace-nowrap">Fare clic sugli elementi, trascinare verso destra per il fence interno, trascinare verso sinistra per il fence interno/sovrapposto oppure premere il tasto Alt e fare clic per posizionare il primo vertice del fence poligonale.</span>
    </div>
    <div className="flex items-center gap-[4px] ml-[8px] text-[#222] font-['Liberation_Serif']">
      <span className="text-[13px] font-bold leading-none">A</span>
      <span className="text-[10px] font-bold leading-none">A</span>
      <svg width="8" height="8" viewBox="0 0 8 8" fill="none" stroke="#333"><path d="M1 4l3-3 3 3M1 7l3-3 3 3" /></svg>
      <span className="flex flex-col items-center gap-[1px] ml-[1px]"><span className="w-[8px] h-[1px] bg-[#222]"></span><span className="w-0 h-0 border-x-[4px] border-x-transparent border-t-[5px] border-t-[#222]"></span></span>
      <svg width="7" height="10" viewBox="0 0 7 10" fill="#444" className="ml-[3px]"><path d="M1.5 0h4v5l1 1H.5l1-1zM3 6h1v4H3z" /></svg>
      <svg width="8" height="8" viewBox="0 0 8 8" stroke="#333" strokeWidth="1.2" className="ml-[3px]"><path d="M1 1l6 6M7 1L1 7" /></svg>
    </div>
    <div className="flex-1"></div>
    <div className="w-[22px] bg-[#f0f0f0]"></div>
  </div>
)

const StatusBar = () => (
  <div className="flex items-center h-[15px] shrink-0 bg-[#0056a6]">
    <div className="flex-1"></div>
    <div className="flex items-center w-[105px] h-[13px] bg-white pl-[3px] mt-[2px] text-[8.5px] text-[#b5b5b5] font-['Open_Sans']">Trova comando</div>
    <svg width="12" height="8" viewBox="0 0 12 8" fill="#fff" className="ml-[3px]"><path d="M0 3h7V0l5 4-5 4V5H0z" /></svg>
    <div className="flex items-center ml-[7px] gap-[4px]">
      <svg width="13" height="13" viewBox="0 0 26 26">{big.zoomw}</svg>
      <svg width="13" height="13" viewBox="0 0 16 16">{glyphs.zoomQ}</svg>
      <svg width="13" height="13" viewBox="0 0 26 26">{big.strum}</svg>
      <svg width="12" height="11" viewBox="0 0 12 11" className="ml-[1px]"><rect width="12" height="11" fill="#1f6fd5" /><rect x="3" y="2" width="3" height="3" fill="#fff" /><rect x="6" y="5" width="3" height="3" fill="#fff" /></svg>
      <svg width="13" height="13" viewBox="0 0 16 16" className="ml-[1px]">{glyphs.grab}</svg>
    </div>
    <div className="flex items-center ml-[4px] w-[111px]">
      <span className="flex items-center justify-center w-[10px] h-[10px] rounded-full bg-[#dcecf8] text-[#333]"><span className="w-[6px] h-[2px] bg-[#444]"></span></span>
      <div className="flex-1 h-[1px] bg-white flex items-center justify-center">
        <svg width="8" height="11" viewBox="0 0 8 11" className="-ml-[6px]"><path d="M.5.5h7v6l-3.5 4-3.5-4z" fill="#5a9bd8" stroke="#cfe6f6" /></svg>
      </div>
      <span className="flex items-center justify-center w-[10px] h-[10px] rounded-full bg-[#dcecf8] text-[#111] text-[10px] font-bold leading-none">+</span>
    </div>
    <span className="ml-[7px] w-[10px] h-[10px] rounded-full bg-[#f01c1c]"></span>
    <svg width="11" height="12" viewBox="0 0 11 12" className="ml-[8px] mr-[2px]"><path d="M5.5 0L11 5H8v3H3V5H0z" fill="#22c03a" /><path d="M2 10h7" stroke="#e09060" strokeWidth="1.5" /></svg>
  </div>
)

const TaskBar = () => (
  <div className="flex items-stretch h-[30px] shrink-0 bg-gradient-to-r from-[#03303c] via-[#052a3f] to-[#0a1f38] text-white font-['Open_Sans']">
    <div className="flex items-center justify-center w-[36px]">
      <svg width="14" height="14" viewBox="0 0 14 14" fill="#fff"><path d="M0 2l6-1v5.5H0zM7 .8L14 0v6.5H7zM0 7.5h6V13l-6-1zM7 7.5h7V14l-7-1z" /></svg>
    </div>
    <div className="flex items-center w-[258px] bg-[#f2f2f2] text-[#333] text-[10.8px]">
      <svg width="14" height="14" viewBox="0 0 14 14" fill="none" stroke="#333" strokeWidth="1.2" className="ml-[10px]"><circle cx="8.5" cy="5.5" r="4.5" /><path d="M5 9l-4 4.500" /></svg>
      <span className="ml-[6px] whitespace-nowrap">Scrivi qui per eseguire la ricerca</span>
    </div>
    <div className="flex items-center justify-center w-[36px]">
      <span className="w-[10px] h-[10px] rounded-full border-2 border-white"></span>
    </div>
    <div className="flex items-center justify-center w-[38px]">
      <svg width="13" height="12" viewBox="0 0 13 12" fill="none" stroke="#dfe6ea"><rect x="1.5" y="2.5" width="6" height="7" /><path d="M0 .5h9M0 11.5h9M11 1v2M11 5v2M11 9v2" strokeWidth="1.2" /></svg>
    </div>
    <div className="flex items-center justify-center w-[36px] ml-[1px] bg-[#1d5062] border-b-2 border-[#4fb8e8]">
      <svg width="18" height="18" viewBox="0 0 28 27">
        <path d="M8 13l7 8h6" fill="none" stroke="#2fd5e5" strokeWidth="3" />
        <path d="M8 6l10 10M20 6v14" fill="none" stroke="#2fa8e0" strokeWidth="4.5" />
      </svg>
    </div>
    <div className="flex-1"></div>
    <div className="flex items-center text-[#e8eef2]">
      <svg width="11" height="7" viewBox="0 0 11 7" fill="none" stroke="#fff" strokeWidth="1.3"><path d="M1 6l4.5-4.5L10 6" /></svg>
      <svg width="14" height="9" viewBox="0 0 14 9" fill="#e8e8e8" className="ml-[6px]"><path d="M3 9a3 3 0 0 1 0-6 4 4 0 0 1 7.5-.5A3.2 3.2 0 0 1 11 9z" /></svg>
      <svg width="14" height="14" viewBox="0 0 14 14" fill="none" stroke="#d8dde2" className="ml-[3px]"><rect x="3.5" y="2.5" width="10" height="7" /><path d="M.5 5h3v8h-3zM6 12h6M8.5 10v2" /></svg>
      <svg width="13" height="11" viewBox="0 0 13 11" fill="none" stroke="#d8dde2" className="ml-[4px]"><path d="M1 4h2l3-3v9L3 7H1zM8 3a4 4 0 0 1 0 5M10 1.5a6 6 0 0 1 0 8" /></svg>
    </div>
    <span className="flex items-center ml-[9px] w-[14px] text-[8.6px]">ITA</span>
    <div className="flex flex-col items-center justify-center w-[56px] ml-[5px] text-[8.6px] leading-[13.5px] whitespace-nowrap">
      <span>14:12</span>
      <span>13/11/2020</span>
    </div>
    <div className="flex items-center justify-center w-[26px] ml-[1px] mr-[12px]">
      <svg width="20" height="21" viewBox="0 0 20 21"><path d="M1 2h13v10H6l-3 3v-3H1z" fill="none" stroke="#fff" strokeWidth="1.2" /><path d="M3 5h9M3 7.5h9" stroke="#fff" /><circle cx="12" cy="14" r="5.5" fill="#2b2f33" stroke="#9aa0a5" /><text x="12" y="17" fontSize="8" textAnchor="middle" fill="#fff" fontFamily="Liberation Sans">1</text></svg>
    </div>
  </div>
)

const App = () => {
  return (
    <div className="flex flex-col w-[1920px] h-[1080px] overflow-hidden bg-white font-['Roboto']">
      <TopBar />
      <Ribbon />
      <DocTabs />
      <div className="flex h-[877px] shrink-0">
        <Panel />
        <div className="flex-1 flex flex-col min-w-0 border-t-2 border-t-[#4a8fc0] -mt-px">
          <Toolbar />
          <Sheet />
        </div>
        <div className="flex flex-col items-center w-[22px] shrink-0 bg-[#f0f0f0] -mt-[24px] z-10 pt-[4px]">
          <svg width="13" height="13" viewBox="0 0 13 13"><circle cx="6.5" cy="6.5" r="6.5" fill="#0a5fb0" /><text x="6.5" y="10" fontSize="10" fontWeight="700" textAnchor="middle" fill="#fff" fontFamily="Liberation Sans">?</text></svg>
          <span className="mt-[2px] [writing-mode:vertical-rl] text-[9.6px] text-[#1a78c2] whitespace-nowrap font-['Liberation_Sans']">Informazioni su Sync3D</span>
        </div>
      </div>
      <SheetTabs />
      <PromptBar />
      <StatusBar />
      <TaskBar />
    </div>
  )
}

export default App
